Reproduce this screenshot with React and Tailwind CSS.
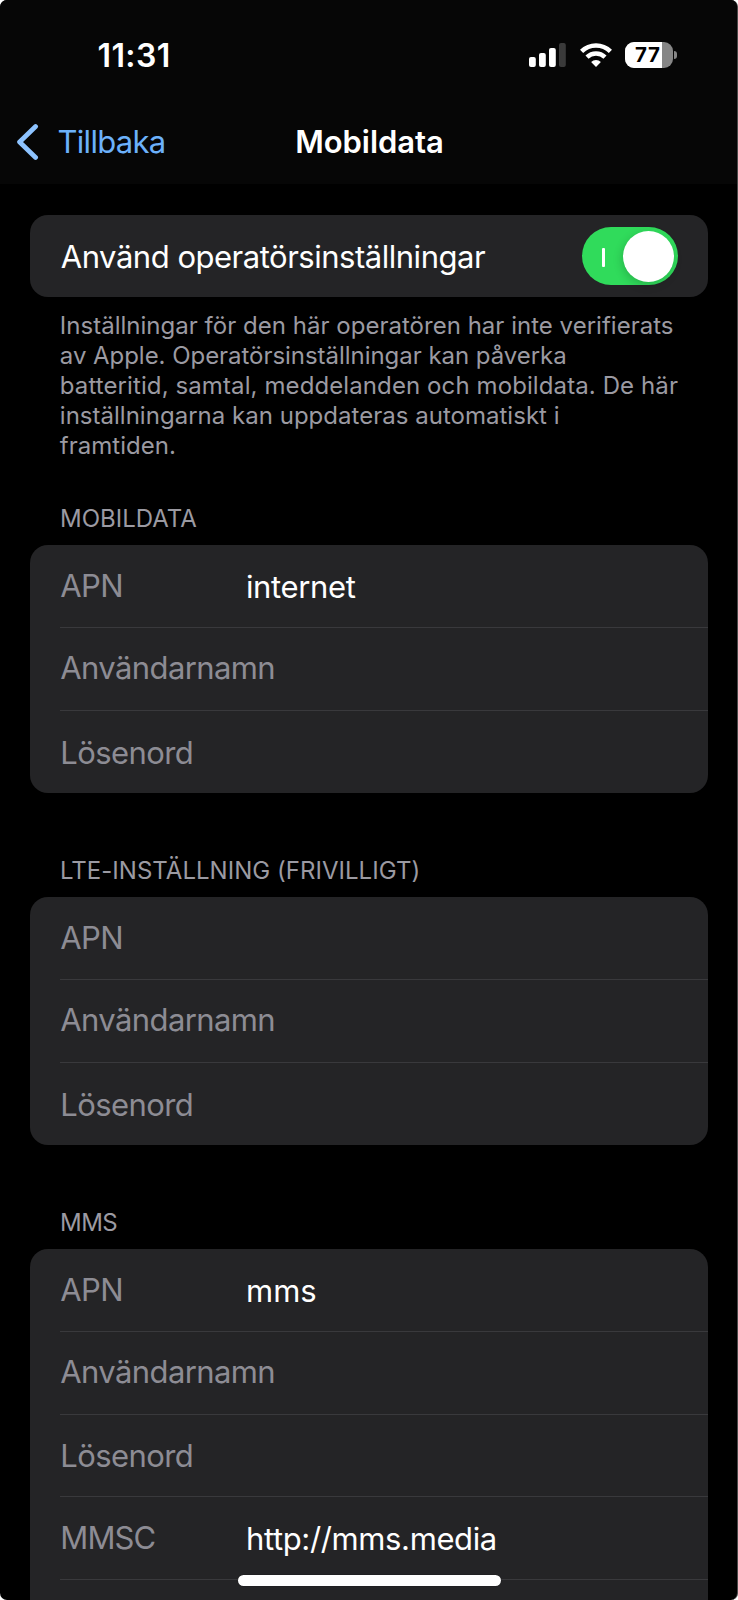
import { useState } from 'react'

const sections = [
  {
    title: 'MOBILDATA',
    tracking: 'tracking-[0px]',
    rows: [
      { label: 'APN', value: 'internet' },
      { label: 'Användarnamn' },
      { label: 'Lösenord', low: true },
    ],
  },
  {
    title: 'LTE-INSTÄLLNING (FRIVILLIGT)',
    tracking: 'tracking-[0.03px]',
    rows: [
      { label: 'APN' },
      { label: 'Användarnamn' },
      { label: 'Lösenord', low: true },
    ],
  },
  {
    title: 'MMS',
    tracking: 'tracking-[-0.5px]',
    rows: [
      { label: 'APN', value: 'mms' },
      { label: 'Användarnamn' },
      { label: 'Lösenord', low: true },
      { label: 'MMSC', value: 'http://mms.media' },
      { label: '' },
    ],
  },
]

function SignalIcon() {
  return (
    <svg className="w-[37px] h-6" viewBox="0 0 37 24">
      <rect x="0" y="14" width="6.8" height="10" rx="2" fill="#fff" />
      <rect x="10" y="10" width="6.8" height="14" rx="2" fill="#fff" />
      <rect x="20" y="5" width="6.8" height="19" rx="2" fill="#fff" />
      <rect x="30" y="0" width="6.8" height="24" rx="2" fill="#3a3a3a" />
    </svg>
  )
}

function WifiIcon() {
  return (
    <svg className="w-8 h-6" viewBox="0 0 32 24" fill="none" stroke="#fff">
      <path d="M1.6 8.4a20.6 20.6 0 0 1 28.8 0" strokeWidth="4.5" />
      <path d="M7 14.2a12.9 12.9 0 0 1 18 0" strokeWidth="4.4" />
      <path d="M16 24l-4.9-5a7 7 0 0 1 9.8 0z" fill="#fff" stroke="none" />
    </svg>
  )
}

function Battery() {
  return (
    <div className="flex items-center gap-[1.5px]">
      <div className="relative flex w-[47.5px] h-[26px] rounded-[9px] overflow-hidden bg-[#868686]">
        <div className="w-[37px] h-full bg-white" />
        <span className="absolute left-[10px] top-0 text-[20.5px] leading-[26px] font-bold tracking-[0.8px] text-black">
          77
        </span>
      </div>
      <div className="w-[3px] h-[8px] rounded-r-full bg-[#868686]" />
    </div>
  )
}

function Toggle({ on, onChange }) {
  return (
    <button
      role="switch"
      aria-checked={on}
      onClick={() => onChange(!on)}
      className={`flex items-center w-24 h-[58px] rounded-full pl-5 pr-1 ${
        on ? 'justify-between bg-[#30db5b]' : 'bg-[#39393d]'
      }`}
    >
      <span className="w-[2.5px] h-[19px] bg-white rounded-[1px] mt-[2px]" />
      <span className="size-[51px] rounded-full bg-white shadow-[-1px_3px_10px_rgba(0,0,0,0.18)]" />
    </button>
  )
}

function Row({ label, value, low, last }) {
  return (
    <div className={`flex items-center h-[82.67px] ${last ? '' : 'border-b border-[#39393c]'}`}>
      <span
        className={`w-[185.7px] shrink-0 text-[31px] text-[#8d8c94] ${
          low ? 'pt-[2px]' : label === 'Användarnamn' ? 'pb-[1px]' : ''
        } ${label === 'MMSC' ? 'tracking-[-0.9px]' : 'tracking-[-0.6px]'}`}
      >
        {label}
      </span>
      {value && (
        <span
          className={`pt-[3px] text-[31px] text-white ${
            value === 'mms' ? 'tracking-[0px]' : 'tracking-[-0.37px]'
          }`}
        >
          {value}
        </span>
      )}
    </div>
  )
}

function App() {
  const [carrier, setCarrier] = useState(true)

  return (
    <div className="w-[738px] h-[1600px] bg-white overflow-hidden font-['Inter',sans-serif]">
      <div className="relative h-full rounded-[7px] overflow-hidden bg-black border-r border-[#4a4a4a]">
        <header className="h-[184px] bg-[#060606]">
          <div className="flex items-center justify-between h-[110px] pl-[97.5px] pr-[60px]">
            <span className="pt-[2px] text-[32px] leading-10 font-semibold tracking-[0.4px] text-white">11:31</span>
            <div className="flex items-center">
              <SignalIcon />
              <div className="ml-[14px]">
                <WifiIcon />
              </div>
              <div className="ml-[13.5px]">
                <Battery />
              </div>
            </div>
          </div>
          <nav className="grid grid-cols-[1fr_auto_1fr] items-center h-16 pl-[17px] pr-[15px]">
            <button className="flex items-center">
              <svg className="w-[22px] h-9" viewBox="0 0 22 36" fill="none" stroke="#8dc3ff" strokeWidth="4.8" strokeLinecap="round" strokeLinejoin="round">
                <path d="M18.6 2.6L2.6 18l16 15.4" />
              </svg>
              <span className="ml-[18.5px] text-[31px] leading-10 tracking-[-0.7px] text-[#6cb1fb]">Tillbaka</span>
            </button>
            <h1 className="text-[31px] leading-10 font-semibold tracking-[-0.05px] text-white">Mobildata</h1>
          </nav>
        </header>

        <main className="pl-[30.3px] pr-[29.5px] pt-[31px]">
          <div className="flex items-center justify-between h-[82.3px] rounded-[18px] bg-[#242426] pl-[30.5px] pr-[29.5px]">
            <span className="text-[31px] tracking-[-0.48px] text-white pt-[2px]">
              Använd operatörsinställningar
            </span>
            <Toggle on={carrier} onChange={setCarrier} />
          </div>

          <p className="mt-[13.5px] pl-[29.5px] text-2xl leading-[30px] tracking-[0.02px] text-[#9b9aa2] whitespace-nowrap">
            Inställningar för den här operatören har inte verifierats
            <br />
            <span className="tracking-[-0.04px]">av Apple. Operatörsinställningar kan påverka</span>
            <br />
            <span className="tracking-[0.1px]">batteritid, samtal, meddelanden och mobildata. De här</span>
            <br />
            inställningarna kan uppdateras automatiskt i
            <br />
            framtiden.
          </p>

          <div className="flex flex-col gap-[62.3px] pt-[42.8px]">
            {sections.map(section => (
              <section key={section.title}>
                <h2 className={`pl-[29.7px] mb-[11.7px] text-2xl leading-[30px] text-[#9b9aa2] ${section.tracking}`}>
                  {section.title}
                </h2>
                <div className="rounded-[18px] bg-[#242426] pl-[30px]">
                  {section.rows.map((row, i) => (
                    <Row key={i} {...row} last={i === section.rows.length - 1} />
                  ))}
                </div>
              </section>
            ))}
          </div>
        </main>

        {/* home indicator */}
        <div className="absolute left-[237.5px] top-[1575px] w-[263.5px] h-[11px] rounded-full bg-white shadow-[0_0_1px_#000]" />
      </div>
    </div>
  )
}

export default App
